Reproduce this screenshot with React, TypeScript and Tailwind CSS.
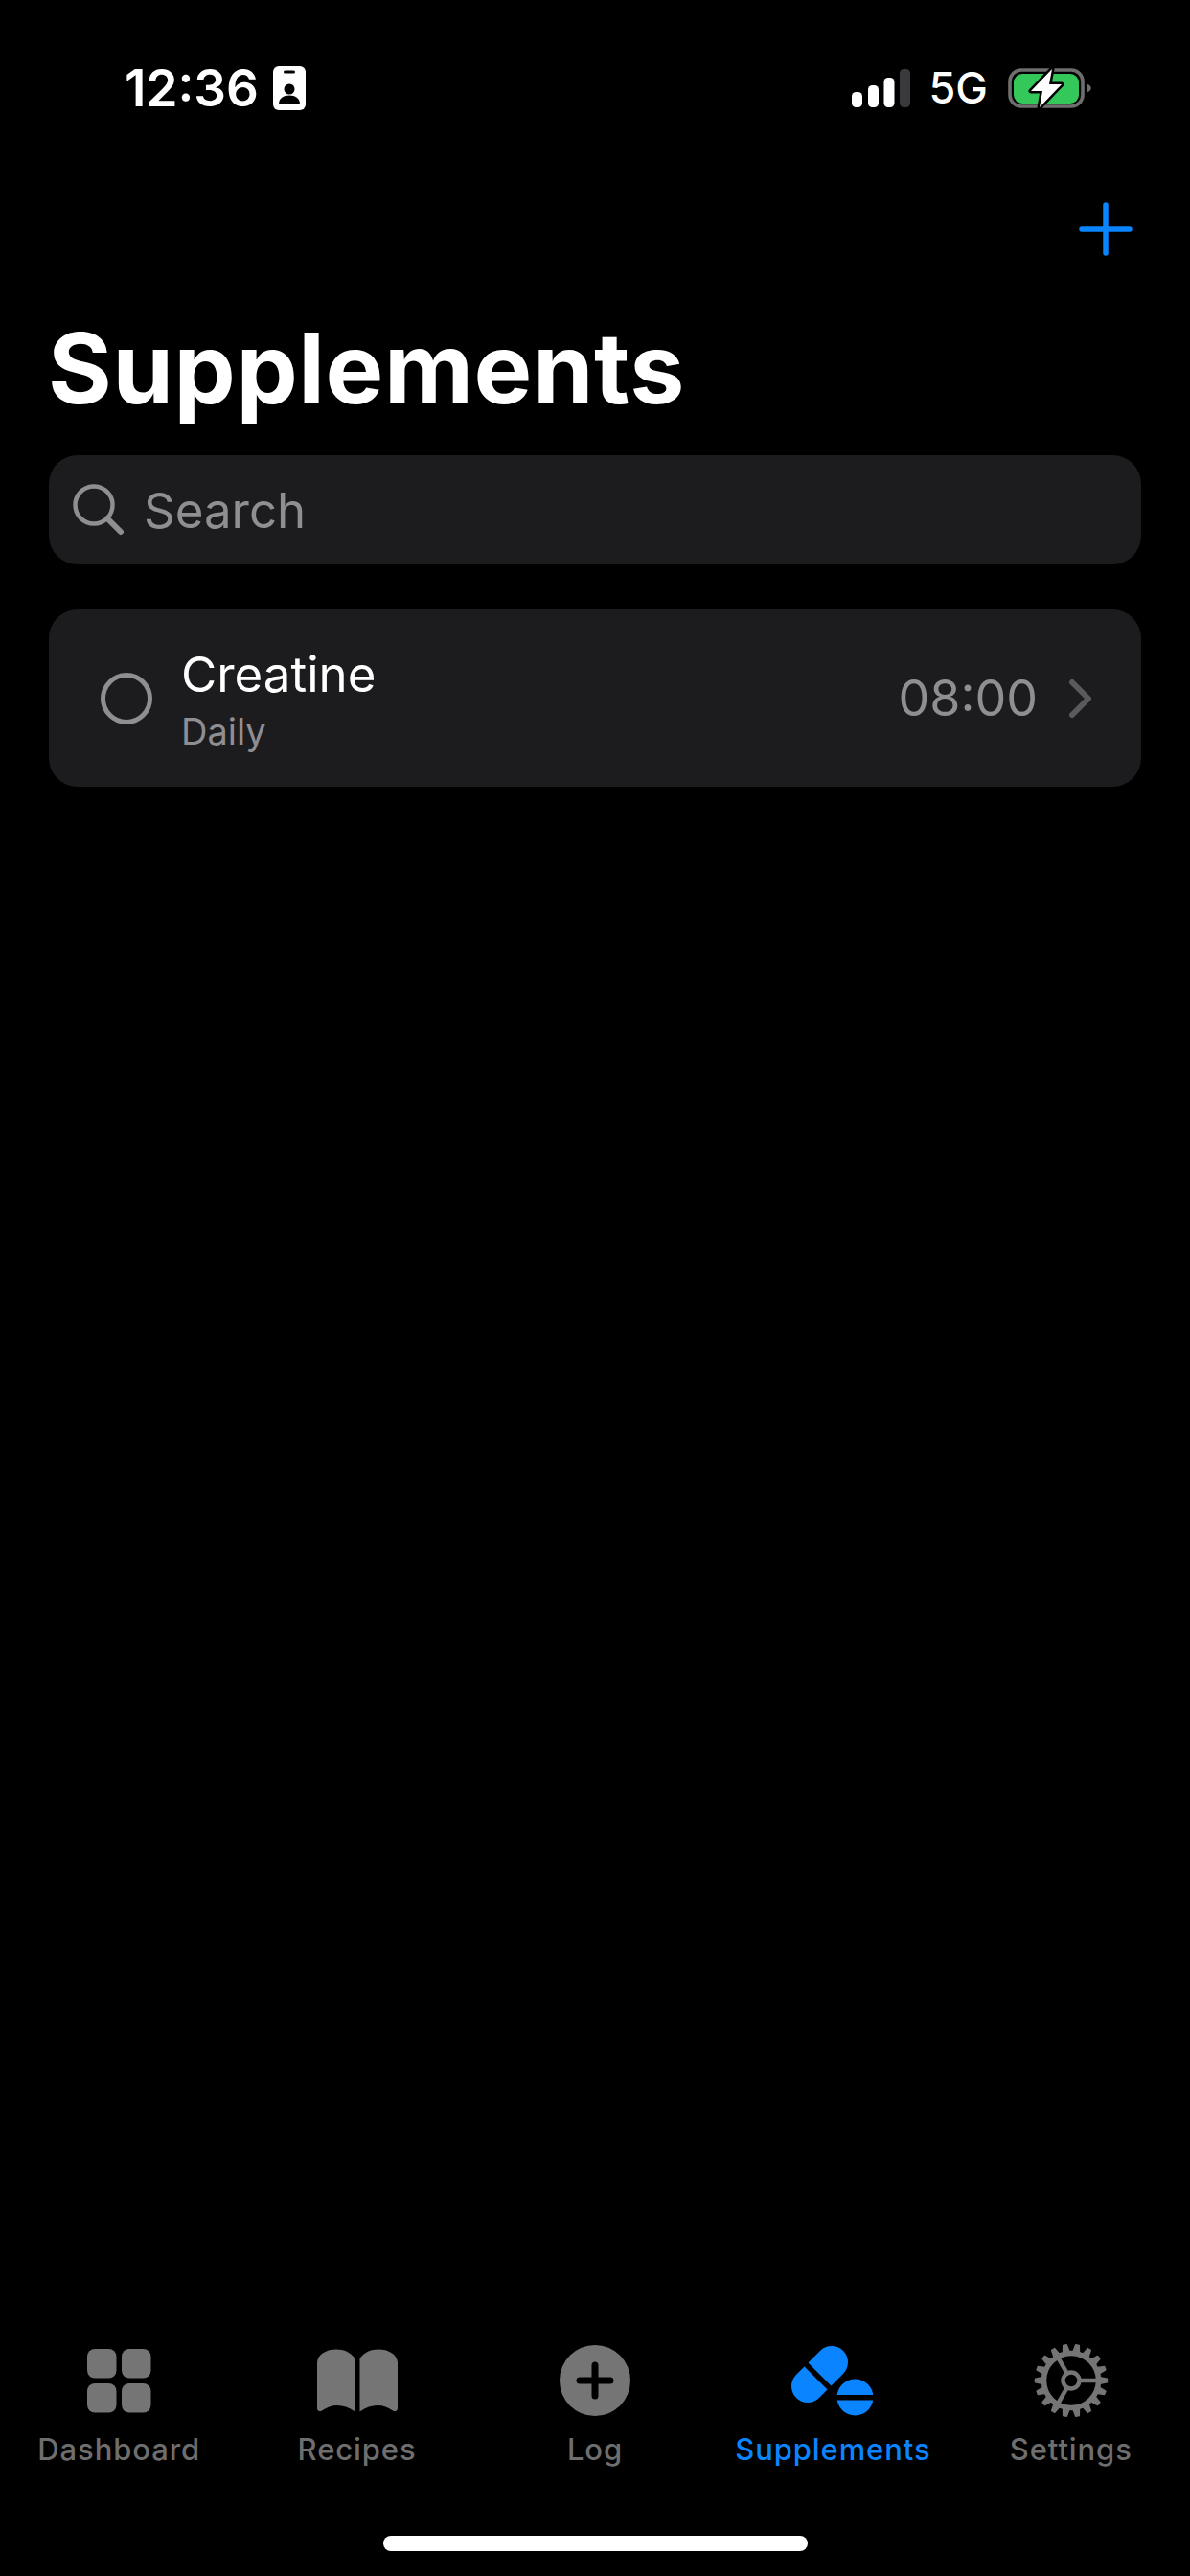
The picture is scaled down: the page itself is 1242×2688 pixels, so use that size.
const blue = "#0a84ff";
const gray = "#757575";

const gearTeeth = Array.from({ length: 18 }, (_, i) => i * 20);

function IdBadge() {
  return (
    <svg width="34" height="46" viewBox="0 0 34 46">
      <rect width="34" height="46" rx="6" fill="#fff" />
      <rect x="11" y="4.5" width="12" height="3" rx="1.5" fill="#000" />
      <circle cx="17" cy="24" r="5.5" fill="#000" />
      <path d="M6 39.5c0-6 5-9 11-9s11 3 11 9z" fill="#000" />
    </svg>
  );
}

function Signal() {
  return (
    <svg width="61" height="40" viewBox="0 0 61 40">
      <rect x="0" y="24" width="11" height="16" rx="4.5" fill="#fff" />
      <rect x="17" y="17" width="11" height="23" rx="4.5" fill="#fff" />
      <rect x="33.5" y="9" width="11" height="31" rx="4.5" fill="#fff" />
      <rect x="50" y="0" width="11" height="40" rx="4.5" fill="#3a3a3c" />
    </svg>
  );
}

function Battery() {
  return (
    <svg width="87" height="42" viewBox="0 0 87 42">
      <rect x="2" y="2" width="76" height="38" rx="12" fill="none" stroke="#6e6e6e" strokeWidth="3.6" />
      <rect x="6" y="6" width="68" height="31" rx="9" fill="#34c759" />
      <path d="M82 16.5c3 .8 4.8 2.4 4.8 4.5s-1.8 3.7-4.8 4.5z" fill="#6e6e6e" />
      <path
        d="M46 1 L24 24 L36 24 L33 41 L56 17 L43 17 Z"
        fill="#fff"
        stroke="#000"
        strokeWidth="5"
        strokeLinejoin="round"
        paintOrder="stroke"
      />
    </svg>
  );
}

function GridIcon() {
  return (
    <svg width="67" height="67" viewBox="0 0 67 67" fill={gray}>
      <rect x="0" y="0" width="30.5" height="30.5" rx="8" />
      <rect x="36" y="0" width="30.5" height="30.5" rx="8" />
      <rect x="0" y="36" width="30.5" height="30.5" rx="8" />
      <rect x="36" y="36" width="30.5" height="30.5" rx="8" />
    </svg>
  );
}

function BookIcon() {
  return (
    <svg width="84" height="66" viewBox="0 0 84 66" fill={gray}>
      <path d="M0 14C1 5 10 .5 20 .5c8 0 15 3 19.500 9.500V65.500C33 61 27 59 21 59c-6 0-11 2-16 5.500-2 1.300-5 .5-5-2.500z" />
      <path d="M84 14C83 5 74 .5 64 .5c-8 0-15 3-19.500 9.500V65.500C51 61 57 59 63 59c6 0 11 2 16 5.500 2 1.300 5 .5 5-2.500z" />
    </svg>
  );
}

function LogIcon() {
  return (
    <svg width="74" height="74" viewBox="0 0 74 74">
      <circle cx="37" cy="37" r="37" fill={gray} />
      <path d="M37 21V53M21 37H53" stroke="#000" strokeWidth="7" strokeLinecap="round" />
    </svg>
  );
}

function PillsIcon() {
  return (
    <svg width="86" height="73" viewBox="0 0 86 73">
      <path d="M17 42L42 17" stroke={blue} strokeWidth="34" strokeLinecap="round" />
      <path d="M10 9L50 49" stroke="#000" strokeWidth="5.500" transform="translate(-3 2)" />
      <circle cx="66.500" cy="53.500" r="19" fill={blue} />
      <rect x="44" y="51" width="46" height="5.500" fill="#000" />
    </svg>
  );
}

function GearIcon() {
  return (
    <svg width="80" height="80" viewBox="-40 -40 80 80" fill="none" stroke={gray}>
      <circle r="28.500" strokeWidth="5.500" />
      <circle r="8.500" strokeWidth="4.500" />
      {gearTeeth.map((deg) => (
        <path
          key={deg}
          d="M-3.500 -29L-1.800 -37.500H1.800L3.500 -29Z"
          fill={gray}
          strokeWidth="1.500"
          strokeLinejoin="round"
          transform={`rotate(${deg + 90})`}
        />
      ))}
      {[0, 120, 240].map((deg) => (
        <path key={deg} d="M9 0H29" strokeWidth="4.500" transform={`rotate(${deg})`} />
      ))}
    </svg>
  );
}

const tabs = [
  { label: "Dashboard", icon: <GridIcon /> },
  { label: "Recipes", icon: <BookIcon /> },
  { label: "Log", icon: <LogIcon /> },
  { label: "Supplements", icon: <PillsIcon />, active: true },
  { label: "Settings", icon: <GearIcon /> },
];

export default function App() {
  return (
    <div className="flex h-[2688px] w-[1242px] flex-col bg-black font-['Inter',sans-serif] text-white">
      <div className="flex h-[200px] items-start justify-between pl-[130px] pr-[103px] pt-[69px]">
        <div className="flex h-[46px] items-center gap-[15px]">
          <span className="text-[53px] font-semibold leading-[46px]">12:36</span>
          <IdBadge />
        </div>
        <div className="flex h-[46px] items-center">
          <Signal />
          <span className="ml-[20px] mr-[21px] text-[45px] font-medium leading-[46px]">5G</span>
          <Battery />
        </div>
      </div>

      <div className="flex justify-end pr-[60px]">
        <svg width="56" height="56" viewBox="0 0 56 56" className="mt-[11px]">
          <path d="M28 3V53M3 28H53" stroke={blue} strokeWidth="5.500" strokeLinecap="round" />
        </svg>
      </div>

      <h1 className="ml-[50px] mt-[57px] text-[102px] font-bold leading-[120px] tracking-[0.6px]">Supplements</h1>

      <div className="mx-[51px] mt-[31px] flex h-[114px] items-center rounded-[30px] bg-[#1c1c1e] pl-[25px]">
        <svg width="54" height="54" viewBox="0 0 54 54" fill="none" stroke="#8e8e93">
          <circle cx="22" cy="22" r="19.500" strokeWidth="4.500" />
          <path d="M36 36L50 50" strokeWidth="6" strokeLinecap="round" />
        </svg>
        <span className="ml-[20px] pt-[2px] text-[51px] leading-[60px] text-[#8e8e93]">Search</span>
      </div>

      <div className="mx-[51px] mt-[47px] flex h-[185px] items-center rounded-[30px] bg-[#1c1c1e] pl-[54px] pr-[51px]">
        <div className="h-[54px] w-[54px] rounded-full border-[5px] border-[#8e8e93]" />
        <div className="ml-[30px] flex flex-col pt-[2px]">
          <span className="text-[51px] leading-[60px]">Creatine</span>
          <span className="mt-[6px] text-[38px] leading-[46px] text-[#8e8e93]">Daily</span>
        </div>
        <span className="ml-auto text-[52px] leading-[60px] text-[#8e8e93]">08:00</span>
        <svg width="24" height="40" viewBox="0 0 24 40" fill="none" className="ml-[33px]">
          <path d="M3 3L20 20L3 37" stroke="#5a5a5e" strokeWidth="6" strokeLinecap="round" strokeLinejoin="round" />
        </svg>
      </div>

      <div className="flex-1" />

      <div className="grid grid-cols-5">
        {tabs.map((tab) => (
          <div key={tab.label} className="flex flex-col items-center">
            <div className="flex h-[80px] items-center justify-center">{tab.icon}</div>
            <span
              className={`mt-[13px] text-[31px] font-medium leading-[38px] tracking-[0.9px] ${
                tab.active ? "text-[#0a84ff]" : "text-[#6e6e6e]"
              }`}
            >
              {tab.label}
            </span>
          </div>
        ))}
      </div>

      <div className="mt-[71px] flex justify-center pb-[26px]">
        <div className="h-[16px] w-[443px] rounded-full bg-white" />
      </div>
    </div>
  );
}
